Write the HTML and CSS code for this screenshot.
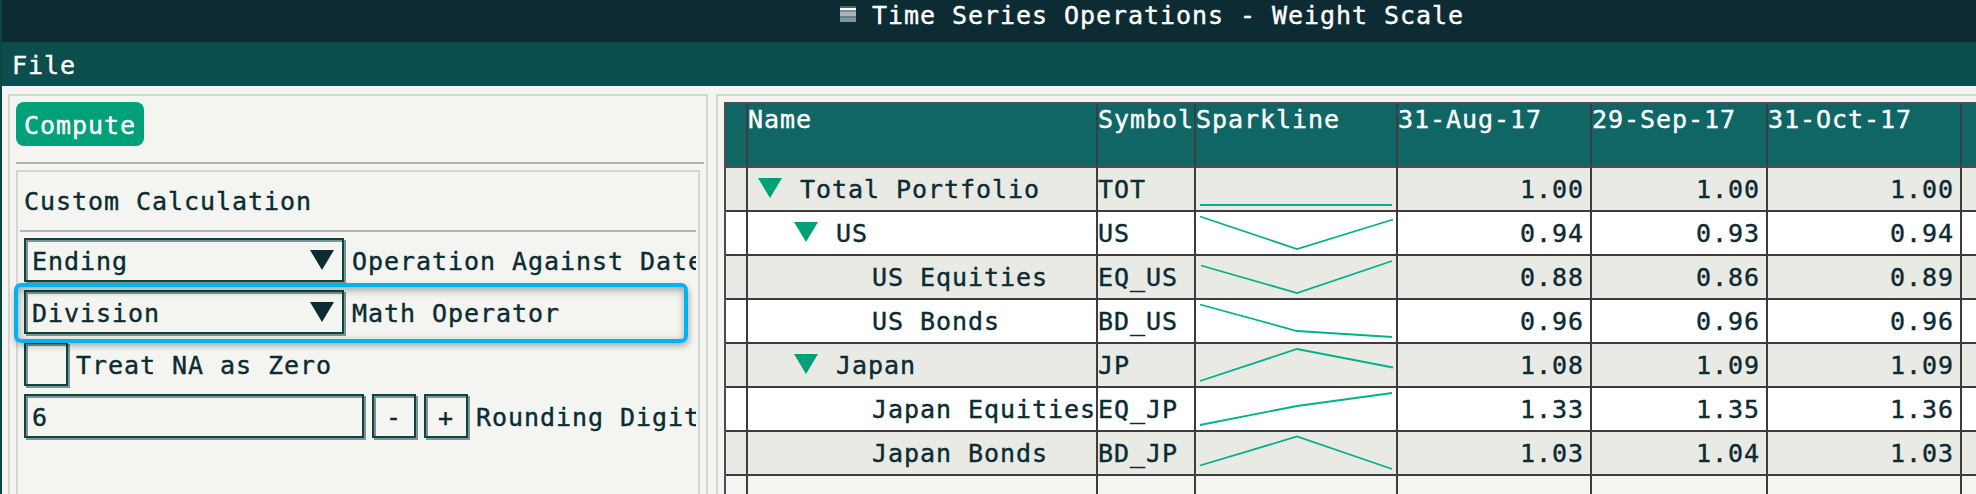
FILE: index.html
```html
<!DOCTYPE html>
<html lang="en">
<head>
    <meta charset="UTF-8">
    <meta name="viewport" content="width=device-width, initial-scale=1.0">
    <title>Time Series Operations - Weight Scale</title>
    <link rel="stylesheet" href="styles.css">
</head>
<body>
    <div class="titlebar">
        <svg class="title-icon" width="16" height="16">
            <rect width="16" height="2" fill="#4d656b"/>
            <rect y="2" width="16" height="2" fill="#ffffff"/>
            <rect y="4" width="16" height="2" fill="#7c8e92"/>
            <rect y="6" width="16" height="4" fill="#a9b5b8"/>
            <rect y="10" width="16" height="2" fill="#6a7e83"/>
            <rect y="12" width="16" height="4" fill="#82939a"/>
        </svg>
        <span>Time Series Operations - Weight Scale</span>
    </div>
    <div class="menubar"><span>File</span></div>

    <div class="content">
        <div class="panel side">
            <button class="compute">Compute</button>
            <div class="separator"></div>
            <div class="group">
                <div class="group-title">Custom Calculation</div>
                <div class="separator inner"></div>
                <div class="form">
                    <div class="row">
                        <div class="box combo">
                            <span>Ending</span>
                            <svg class="arrow" width="24" height="20"><path d="M0 0H24L12 20Z"/></svg>
                        </div>
                        <span>Operation Against Date</span>
                    </div>
                    <div class="row">
                        <div class="box combo">
                            <span>Division</span>
                            <svg class="arrow" width="24" height="20"><path d="M0 0H24L12 20Z"/></svg>
                        </div>
                        <span>Math Operator</span>
                        <div class="highlight"></div>
                    </div>
                    <div class="row">
                        <div class="box square"></div>
                        <span>Treat NA as Zero</span>
                    </div>
                    <div class="row">
                        <div class="box number">6</div>
                        <div class="box square">-</div>
                        <div class="box square">+</div>
                        <span>Rounding Digit</span>
                    </div>
                </div>
            </div>
        </div>

        <div class="panel main">
            <div class="grid">
                <div class="line head">
                    <div></div><div>Name</div><div>Symbol</div><div>Sparkline</div>
                    <div>31-Aug-17</div><div>29-Sep-17</div><div>31-Oct-17</div><div></div>
                </div>
                <div class="line">
                    <div></div>
                    <div class="name"><svg class="arrow" width="24" height="20"><path d="M0 0H24L12 20Z"/></svg>Total Portfolio</div>
                    <div>TOT</div>
                    <div><svg class="spark" width="200" height="42"><polyline points="4,37 101,37 196,37"/></svg></div>
                    <div class="num">1.00</div><div class="num">1.00</div><div class="num">1.00</div><div></div>
                </div>
                <div class="line">
                    <div></div>
                    <div class="name level1"><svg class="arrow" width="24" height="20"><path d="M0 0H24L12 20Z"/></svg>US</div>
                    <div>US</div>
                    <div><svg class="spark" width="200" height="42"><polyline points="4,4.5 101,37 197,7.5"/></svg></div>
                    <div class="num">0.94</div><div class="num">0.93</div><div class="num">0.94</div><div></div>
                </div>
                <div class="line">
                    <div></div>
                    <div class="name level2">US Equities</div>
                    <div>EQ_US</div>
                    <div><svg class="spark" width="200" height="42"><polyline points="5,9.5 101,37 196,5"/></svg></div>
                    <div class="num">0.88</div><div class="num">0.86</div><div class="num">0.89</div><div></div>
                </div>
                <div class="line">
                    <div></div>
                    <div class="name level2">US Bonds</div>
                    <div>BD_US</div>
                    <div><svg class="spark" width="200" height="42"><polyline points="4,4.5 101,31 196,37"/></svg></div>
                    <div class="num">0.96</div><div class="num">0.96</div><div class="num">0.96</div><div></div>
                </div>
                <div class="line">
                    <div></div>
                    <div class="name level1"><svg class="arrow" width="24" height="20"><path d="M0 0H24L12 20Z"/></svg>Japan</div>
                    <div>JP</div>
                    <div><svg class="spark" width="200" height="42"><polyline points="4,37 101,5 197,23.5"/></svg></div>
                    <div class="num">1.08</div><div class="num">1.09</div><div class="num">1.09</div><div></div>
                </div>
                <div class="line">
                    <div></div>
                    <div class="name level2">Japan Equities</div>
                    <div>EQ_JP</div>
                    <div><svg class="spark" width="200" height="42"><polyline points="4,37 101,18 196,5"/></svg></div>
                    <div class="num">1.33</div><div class="num">1.35</div><div class="num">1.36</div><div></div>
                </div>
                <div class="line">
                    <div></div>
                    <div class="name level2">Japan Bonds</div>
                    <div>BD_JP</div>
                    <div><svg class="spark" width="200" height="42"><polyline points="4,33.5 101,4.5 196,37"/></svg></div>
                    <div class="num">1.03</div><div class="num">1.04</div><div class="num">1.03</div><div></div>
                </div>
                <div class="line blank">
                    <div></div><div></div><div></div><div></div><div></div><div></div><div></div><div></div>
                </div>
            </div>
        </div>
    </div>
</body>
</html>
```

FILE: styles.css
```css
*{
    box-sizing: border-box;
}

body{
    margin: 0;
    height: 494px;
    overflow: hidden;
    display: flex;
    flex-direction: column;
    border-left: 2px solid #0b4645;
    background-color: #f4f5f0;
    color: #0c2b33;
    font-family: "DejaVu Sans Mono", monospace;
    font-size: 25px;
    letter-spacing: 0.95px;
    line-height: 47px;
    white-space: nowrap;
    -webkit-text-stroke: 0.4px;
}

svg{
    display: block;
    flex: none;
}

.titlebar{
    height: 42px;
    flex: none;
    display: flex;
    gap: 16px;
    padding-left: 838px;
    line-height: 32px;
    background-color: #0c2b33;
    color: white;
}

.title-icon{
    margin-top: 6px;
}

.menubar{
    height: 44px;
    flex: none;
    padding-left: 10px;
    background-color: #0c4e4d;
    color: white;
}

.content{
    flex: 1;
    min-height: 0;
    display: flex;
    gap: 8px;
    padding: 8px 0 0 6px;
}

.panel{
    border: 2px solid #d4d5d4;
    border-bottom: none;
    padding: 6px 6px 0;
}

.side{
    width: 700px;
    flex: none;
    padding-right: 2px;
    display: flex;
    flex-direction: column;
}

.compute{
    width: 128px;
    height: 44px;
    flex: none;
    padding: 0 0 0 8px;
    border: none;
    border-radius: 8px;
    background-color: #00a079;
    color: white;
    font: inherit;
    letter-spacing: inherit;
    line-height: 47px;
    text-align: left;
}

.separator{
    height: 2px;
    flex: none;
    margin: 16px 0 6px;
    background-color: #b1b3b3;
}

.group{
    flex: 1;
    width: 684px;
    border: 2px solid #d4d5d4;
    border-bottom: none;
    padding: 6px 2px 0;
}

.group-title{
    height: 44px;
    padding-left: 4px;
}

.separator.inner{
    margin: 8px 0 6px;
}

.form{
    display: flex;
    flex-direction: column;
    gap: 8px;
    padding-left: 4px;
    width: 676px;
}

.row{
    position: relative;
    display: flex;
    gap: 8px;
    height: 44px;
}

.row > span{
    flex: 1;
    min-width: 0;
    height: 47px;
    overflow: hidden;
}

.box{
    flex: none;
    height: 44px;
    border: 2px solid #0b4645;
    box-shadow: 2px 2px #7f9392, inset 2px 2px #7f9392;
    line-height: 43px;
}

.combo{
    width: 320px;
    display: flex;
    justify-content: space-between;
    padding: 0 8px 0 6px;
}

.combo .arrow{
    margin-top: 10px;
}

.number{
    width: 340px;
    padding-left: 6px;
}

.square{
    width: 44px;
    text-align: center;
}

.arrow{
    fill: #0c2b33;
}

/* selected field marker */
.highlight{
    position: absolute;
    left: -10px;
    top: -7px;
    width: 674px;
    height: 60px;
    border: 4px solid #00b4f0;
    border-radius: 7px;
    box-shadow: 1px 3px 6px rgba(0,0,0,0.3), inset 1px 3px 8px rgba(0,0,0,0.35);
    z-index: 1;
}

.main{
    flex: 1;
    min-width: 0;
    border-right: none;
    padding-right: 0;
}

.grid{
    height: 100%;
    display: flex;
    flex-direction: column;
    border-left: 2px solid #4c4d57;
    border-top: 2px solid #4c4d57;
}

.line{
    flex: none;
    height: 44px;
    display: grid;
    grid-template-columns: 22px 350px 98px 202px 194px 176px 194px 1fr;
    grid-template-rows: 100%;
    background-color: white;
}

.line:nth-child(even){
    background-color: #e9eae3;
}

.line > div{
    border-right: 2px solid #3e3b42;
    border-bottom: 2px solid #3e3b42;
    line-height: 44px;
    min-width: 0;
}

.line > div:last-child{
    border-right: none;
}

.line.head{
    height: 64px;
    background-color: #106665;
    color: white;
}

.line.head > div{
    border-bottom-color: #4c4d57;
    line-height: 32px;
}

.line.blank{
    flex: 1;
    height: auto;
    background-color: #f4f5f0;
}

.line.blank > div{
    border-bottom: none;
}

.name{
    display: flex;
    gap: 18px;
    padding-left: 10px;
}

.name .arrow{
    margin-top: 10px;
    fill: #00a079;
}

.level1{
    padding-left: 46px;
}

.level2{
    padding-left: 124px;
}

.num{
    text-align: right;
    padding-right: 6px;
}

.spark{
    fill: none;
    stroke: #00b28a;
    stroke-width: 1.8;
}
```
